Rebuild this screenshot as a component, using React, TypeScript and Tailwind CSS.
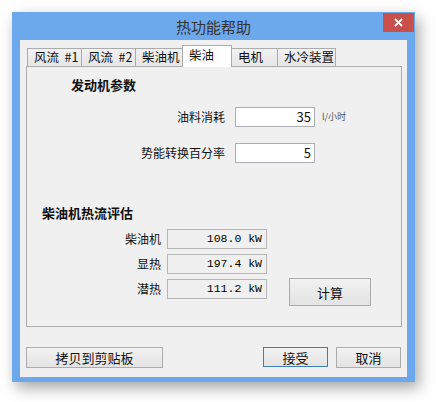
import React from 'react'

const ui = { fontFamily: '"Noto Sans CJK SC", "Liberation Sans", sans-serif' }
const mono = { fontFamily: '"Liberation Mono", "Noto Sans CJK SC", monospace' }

const tabs = [
  { name: '风流\u00a0 #1', w: 'w-[54px]' },
  { name: '风流\u00a0 #2', w: 'w-[54px]' },
  { name: '柴油机', w: 'w-[47px]' },
  { name: '柴油', w: 'w-[50px]', active: true },
  { name: '电机', w: 'w-[46px]' },
  { name: '水冷装置', w: 'w-[59px]' },
]

const heat = [
  { label: '柴油机', value: '108.0 kW' },
  { label: '显热', value: '197.4 kW' },
  { label: '潜热', value: '111.2 kW' },
]

const Btn = ({ children, className = '' }: { children: React.ReactNode; className?: string }) => (
  <button
    className={
      'flex items-center justify-center border bg-gradient-to-b from-[#f2f2f2] to-[#e3e3e3] text-[13px] leading-none text-[#111] ' +
      className
    }
  >
    {children}
  </button>
)

export default function App() {
  return (
    <div className="w-[436px] h-[402px] bg-white pt-[12px] pl-[12px] overflow-hidden" style={ui}>
      {/* Window */}
      <div className="w-[403px] h-[370px] bg-[#6ca8ec] flex flex-col px-[8px] pb-[5px] shadow-[4px_6px_14px_rgba(0,0,0,0.35)]">
        {/* Title bar */}
        <div className="h-[28px] grid grid-cols-[1fr_auto_1fr] -mx-[8px]">
          <div />
          <div className="pt-[5px] text-[15px] leading-[20px] text-[#333]">热功能帮助</div>
          <div className="flex justify-end items-start pt-[1px] pr-[1px]">
            <div className="w-[31px] h-[19px] bg-[#c7504d] flex items-center justify-center">
              <svg width="9" height="9" viewBox="0 0 9 9">
                <path d="M1 1 L8 8 M8 1 L1 8" stroke="white" strokeWidth="1.8" />
              </svg>
            </div>
          </div>
        </div>

        {/* Client */}
        <div className="flex-1 bg-[#f0f0f0] pl-[6px] pr-[5px] pt-[5px] flex flex-col">
          {/* Tab strip */}
          <div className="h-[21px] flex items-end pl-[1px]">
            {tabs.map((t, i) => (
              <div
                key={i}
                className={
                  t.w +
                  ' border-t border-l border-[#acacac] text-[12.5px] leading-none flex items-center pl-[6px] text-[#111] whitespace-nowrap ' +
                  (i === tabs.length - 1 ? 'border-r ' : '') +
                  (t.active
                    ? 'h-[22px] -mb-px bg-white relative z-10 border-r items-start pt-[3px] -mr-px'
                    : 'h-[18px] bg-gradient-to-b from-[#f2f2f2] to-[#e6e6e6]')
                }
              >
                {t.name}
              </div>
            ))}
          </div>

          {/* Tab panel */}
          <div className="h-[261px] border border-[#adadad] bg-[#f0f0f0] flex flex-col">
            <div className="pl-[44px] mt-[9px] text-[13px] font-bold leading-[18px] text-[#111]">发动机参数</div>

            <div className="mt-[13px] flex items-center h-[20px]">
              <div className="w-[198px] text-right text-[12px] text-[#111]">油料消耗</div>
              <div className="ml-[10px] w-[80px] h-[20px] bg-white border border-[#abadb3] text-right pr-[3px] text-[13px] leading-[18px] text-[#111]">
                35
              </div>
              <div className="ml-[7px] text-[9px] text-[#555]">l/小时</div>
            </div>

            <div className="mt-[16px] flex items-center h-[20px]">
              <div className="w-[198px] text-right text-[12px] text-[#111]">势能转换百分率</div>
              <div className="ml-[10px] w-[80px] h-[20px] bg-white border border-[#abadb3] text-right pr-[3px] text-[13px] leading-[18px] text-[#111]">
                5
              </div>
            </div>

            <div className="pl-[15px] mt-[41px] text-[13px] font-bold leading-[18px] text-[#111]">柴油机热流评估</div>

            <div className="mt-[7px] flex items-end">
              <div className="flex flex-col gap-[5px]">
                {heat.map((h, i) => (
                  <div key={i} className="flex items-center h-[20px]">
                    <div className="w-[134px] text-right text-[12px] text-[#111]">{h.label}</div>
                    <div
                      className="ml-[6px] w-[100px] h-[20px] border border-[#b5b5b5] bg-[#f0f0f0] text-right pr-[4px] text-[11.5px] leading-[18px] text-[#000]"
                      style={mono}
                    >
                      {h.value}
                    </div>
                  </div>
                ))}
              </div>
              <Btn className="ml-[22px] -mb-[7px] w-[82px] h-[28px] border-[#acacac]">计算</Btn>
            </div>
          </div>

          {/* Bottom buttons */}
          <div className="mt-[20px] flex items-start">
            <Btn className="w-[137px] h-[21px] border-[#acacac]">拷贝到剪贴板</Btn>
            <div className="flex-1" />
            <Btn className="w-[65px] h-[20px] border-[#3c7fb1]">接受</Btn>
            <Btn className="ml-[8px] w-[65px] h-[21px] border-[#acacac]">取消</Btn>
            <div className="w-[1px]" />
          </div>
        </div>
      </div>
    </div>
  )
}
